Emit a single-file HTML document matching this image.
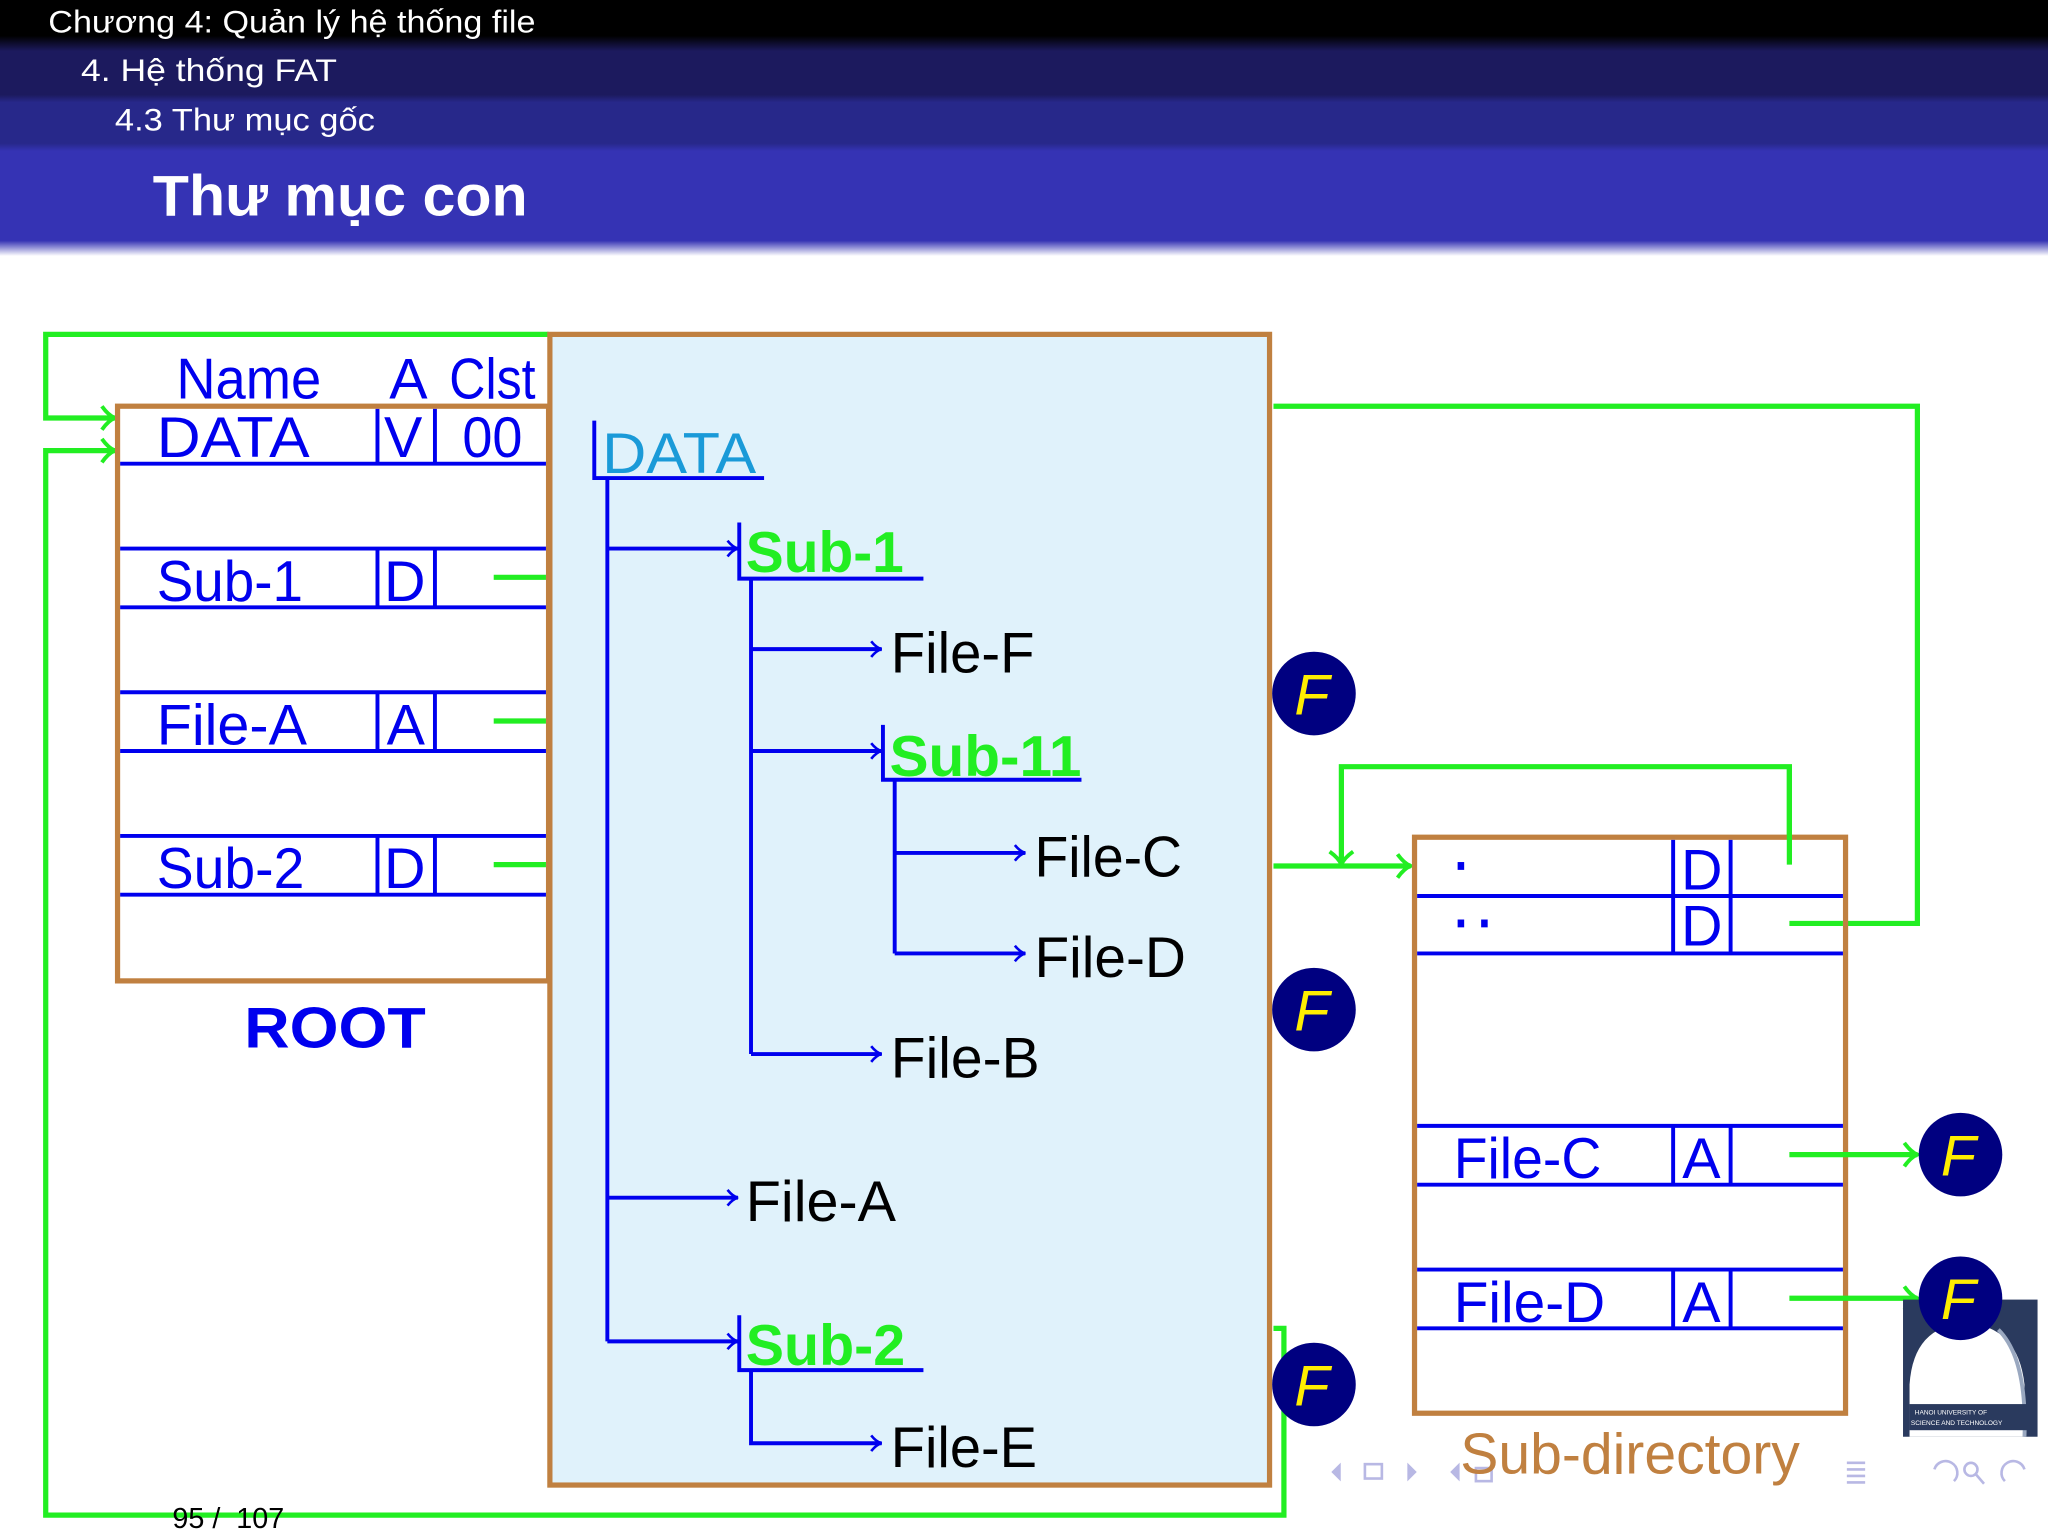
<!DOCTYPE html>
<html><head><meta charset="utf-8"><style>
html,body{margin:0;padding:0;background:#fff;width:2048px;height:1536px;overflow:hidden}
svg{display:block}
text{font-family:"Liberation Sans","DejaVu Sans",sans-serif}
</style></head><body>
<svg width="2048" height="1536" viewBox="0 0 1568 1176" xmlns="http://www.w3.org/2000/svg">
<defs>
<linearGradient id="hd" x1="0" y1="0" x2="0" y2="1">
<stop offset="0" stop-color="#000"/>
<stop offset="0.14" stop-color="#000"/>
<stop offset="0.2" stop-color="#1c1a5e"/>
<stop offset="0.37" stop-color="#1c1a5e"/>
<stop offset="0.4" stop-color="#27288a"/>
<stop offset="0.56" stop-color="#27288a"/>
<stop offset="0.59" stop-color="#3533b4"/>
<stop offset="0.94" stop-color="#3533b4"/>
<stop offset="1" stop-color="#ffffff"/>
</linearGradient>
<marker id="ab" markerWidth="12" markerHeight="14" refX="10" refY="7" orient="auto" markerUnits="userSpaceOnUse">
<path d="M2,1 Q6,6 10,7 Q6,8 2,13" fill="none" stroke="#0000ee" stroke-width="2"/></marker>
<marker id="ag" markerWidth="16" markerHeight="20" refX="13" refY="10" orient="auto" markerUnits="userSpaceOnUse">
<path d="M3,1 Q8,8 13,10 Q8,12 3,19" fill="none" stroke="#22ee22" stroke-width="3"/></marker>
</defs>
<rect x="0" y="0" width="1568" height="196" fill="url(#hd)"/>
<text x="37" y="25" fill="#fff" font-size="24" textLength="373" lengthAdjust="spacingAndGlyphs">Chương 4: Quản lý hệ thống file</text>
<text x="62" y="62" fill="#fff" font-size="24" textLength="196" lengthAdjust="spacingAndGlyphs">4. Hệ thống FAT</text>
<text x="88" y="100" fill="#fff" font-size="24" textLength="199" lengthAdjust="spacingAndGlyphs">4.3 Thư mục gốc</text>
<text x="117" y="165" fill="#fff" font-size="44" font-weight="bold" textLength="287" lengthAdjust="spacingAndGlyphs">Thư mục con</text>

<g fill="none" stroke="#22ee22" stroke-width="4">
<path d="M420,256 H35 V320 H88" marker-end="url(#ag)"/>
<path d="M975,1017 H983 V1160 H35 V345 H88" marker-end="url(#ag)"/>
<path d="M975,311 H1468 V707 H1370"/>
<path d="M975,663 H1080" marker-end="url(#ag)"/>
<path d="M1370,662 V587 H1027 V662" marker-end="url(#ag)"/>
</g>

<rect x="90" y="311" width="330" height="440" fill="#fff" stroke="#c08040" stroke-width="4"/>
<g stroke="#0000ee" stroke-width="3">
<path d="M92,355 H418 M92,420 H418 M92,465 H418 M92,530 H418 M92,575 H418 M92,640 H418 M92,685 H418"/>
<path d="M289,313 V355 M333,313 V355 M289,420 V465 M333,420 V465 M289,530 V575 M333,530 V575 M289,640 V685 M333,640 V685"/>
</g>
<g fill="#0000ee" font-size="44">
<text x="135" y="305" textLength="111" lengthAdjust="spacingAndGlyphs">Name</text><text x="298" y="305">A</text><text x="344" y="305" textLength="66" lengthAdjust="spacingAndGlyphs">Clst</text>
<text x="120" y="350" textLength="117" lengthAdjust="spacingAndGlyphs">DATA</text><text x="294" y="350">V</text><text x="354" y="350" textLength="46" lengthAdjust="spacingAndGlyphs">00</text>
<text x="120" y="460" textLength="112" lengthAdjust="spacingAndGlyphs">Sub-1</text><text x="294" y="460">D</text>
<text x="120" y="570" textLength="115" lengthAdjust="spacingAndGlyphs">File-A</text><text x="296" y="570">A</text>
<text x="120" y="680" textLength="113" lengthAdjust="spacingAndGlyphs">Sub-2</text><text x="294" y="680">D</text>
<text x="187" y="802" font-weight="bold" textLength="139" lengthAdjust="spacingAndGlyphs">ROOT</text>
</g>
<g stroke="#22ee22" stroke-width="4"><path d="M378,442 H418 M378,552 H418 M378,662 H418"/></g>

<rect x="421" y="256" width="551" height="881" fill="#e0f2fb" stroke="#c08040" stroke-width="4"/>
<text x="461" y="362" fill="#1a9ad8" font-size="44" textLength="118" lengthAdjust="spacingAndGlyphs">DATA</text>
<g stroke="#0000ee" stroke-width="3" fill="none">
<path d="M455,322 V366 H585"/>
<path d="M465,366 V1027"/>
<path d="M465,420 H565" marker-end="url(#ab)"/>
<path d="M566,400 V443 H707"/>
<path d="M575,443 V807"/>
<path d="M575,497 H675" marker-end="url(#ab)"/>
<path d="M575,575 H675" marker-end="url(#ab)"/>
<path d="M676,555 V597 H828"/>
<path d="M685,597 V730"/>
<path d="M685,653 H785" marker-end="url(#ab)"/>
<path d="M685,730 H785" marker-end="url(#ab)"/>
<path d="M575,807 H675" marker-end="url(#ab)"/>
<path d="M465,917 H565" marker-end="url(#ab)"/>
<path d="M465,1027 H565" marker-end="url(#ab)"/>
<path d="M566,1007 V1049 H707"/>
<path d="M575,1049 V1105 H675" marker-end="url(#ab)"/>
</g>
<g font-size="44">
<text x="571" y="438" fill="#22ee22" font-weight="bold" textLength="121" lengthAdjust="spacingAndGlyphs">Sub-1</text>
<text x="682" y="515" fill="#000" textLength="110" lengthAdjust="spacingAndGlyphs">File-F</text>
<text x="681" y="594" fill="#22ee22" font-weight="bold" textLength="147" lengthAdjust="spacingAndGlyphs">Sub-11</text>
<text x="792" y="671" fill="#000" textLength="113" lengthAdjust="spacingAndGlyphs">File-C</text>
<text x="792" y="748" fill="#000" textLength="116" lengthAdjust="spacingAndGlyphs">File-D</text>
<text x="682" y="825" fill="#000" textLength="114" lengthAdjust="spacingAndGlyphs">File-B</text>
<text x="571" y="935" fill="#000" textLength="115" lengthAdjust="spacingAndGlyphs">File-A</text>
<text x="571" y="1045" fill="#22ee22" font-weight="bold" textLength="122" lengthAdjust="spacingAndGlyphs">Sub-2</text>
<text x="682" y="1123" fill="#000" textLength="112" lengthAdjust="spacingAndGlyphs">File-E</text>
</g>

<rect x="1083" y="641" width="330" height="441" fill="#fff" stroke="#c08040" stroke-width="4"/>
<g stroke="#0000ee" stroke-width="3">
<path d="M1085,686 H1411 M1085,730 H1411 M1085,862 H1411 M1085,907 H1411 M1085,972 H1411 M1085,1017 H1411"/>
<path d="M1281,643 V730 M1325,643 V730 M1281,862 V907 M1325,862 V907 M1281,972 V1017 M1325,972 V1017"/>
</g>
<g fill="#0000ee">
<rect x="1116" y="660" width="5" height="6"/>
<rect x="1116" y="704" width="5" height="6"/><rect x="1134" y="704" width="5" height="6"/>
</g>
<g fill="#0000ee" font-size="44">
<text x="1287" y="681">D</text><text x="1287" y="724">D</text>
<text x="1113" y="902" textLength="113" lengthAdjust="spacingAndGlyphs">File-C</text><text x="1288" y="902">A</text>
<text x="1113" y="1012" textLength="116" lengthAdjust="spacingAndGlyphs">File-D</text><text x="1288" y="1012">A</text>
</g>
<g stroke="#22ee22" stroke-width="4" fill="none">
<path d="M1370,662 V587 M1370,707 H1411"/>
<path d="M1370,884 H1468" marker-end="url(#ag)"/>
<path d="M1370,994 H1468" marker-end="url(#ag)"/>
</g>

<rect x="1457" y="995" width="103" height="105" fill="#2a3a5e"/>
<path d="M1462,1100 V1060 Q1465,1015 1505,1013 Q1545,1015 1550,1060 V1100 Z" fill="#fff"/>
<path d="M1530,1018 Q1552,1040 1550,1100" fill="none" stroke="#9aa8c0" stroke-width="3"/>
<rect x="1462" y="1075" width="94" height="20" fill="#2a3a5e"/>
<text x="1466" y="1083" fill="#fff" font-size="5">HANOI UNIVERSITY OF</text>
<text x="1463" y="1091" fill="#fff" font-size="5">SCIENCE AND TECHNOLOGY</text>

<g>
<circle cx="1006" cy="531" r="32" fill="#000080"/>
<circle cx="1006" cy="773" r="32" fill="#000080"/>
<circle cx="1006" cy="1060" r="32" fill="#000080"/>
<circle cx="1501" cy="884" r="32" fill="#000080"/>
<circle cx="1501" cy="994" r="32" fill="#000080"/>
</g>
<g fill="#ffee00" font-size="44" font-style="italic">
<text x="991" y="547">F</text><text x="991" y="789">F</text><text x="991" y="1076">F</text>
<text x="1486" y="900">F</text><text x="1486" y="1010">F</text>
</g>

<g fill="#b8b8e4" stroke="#b8b8e4">
<path d="M1026,1121 L1020,1127 L1026,1133Z"/>
<rect x="1045" y="1121" width="13" height="11" fill="none" stroke-width="2"/>
<path d="M1078,1121 L1084,1127 L1078,1133Z"/>
<path d="M1117,1121 L1111,1127 L1117,1133Z"/>
<rect x="1130" y="1124" width="12" height="10" fill="none" stroke-width="2"/>
<path d="M1414,1120 H1428 M1414,1125 H1428 M1414,1130 H1428 M1414,1135 H1428" stroke-width="2"/>
<path d="M1496,1134 A9,9 0 1 0 1481,1125" fill="none" stroke-width="2"/>
<circle cx="1509" cy="1125" r="5" fill="none" stroke-width="2"/>
<path d="M1513,1129 L1519,1136" stroke-width="2"/>
<path d="M1535,1134 A9,9 0 1 1 1550,1125" fill="none" stroke-width="2"/>
</g>
<text x="1118" y="1128" fill="#c08040" font-size="44" textLength="260" lengthAdjust="spacingAndGlyphs">Sub-directory</text>
<text x="132" y="1170" fill="#000" font-size="22" xml:space="preserve">95 /  107</text>
</svg>
</body></html>
